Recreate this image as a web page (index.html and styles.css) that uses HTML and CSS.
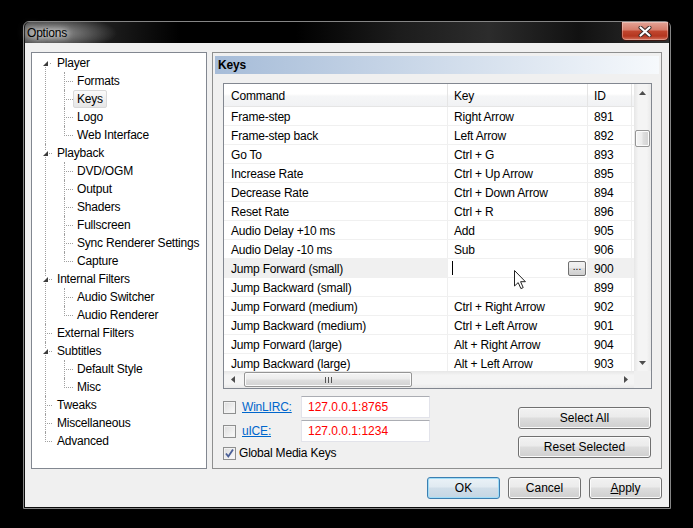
FILE: index.html
```html
<!DOCTYPE html>
<html lang="en">
<head>
  <meta charset="UTF-8" />
  <title>Options</title>
  <link rel="stylesheet" href="styles.css">
</head>
<body>
  <div class="window">
    <div class="titlebar">
      <span class="title">Options</span>
      <button class="close-btn" title="Close">
        <svg width="14" height="11" viewBox="0 0 14 11">
          <path d="M2.5 1.5 L11.5 9.5 M11.5 1.5 L2.5 9.5" stroke="#3a2a28" stroke-width="4" stroke-linecap="round"/>
          <path d="M2.5 1.5 L11.5 9.5 M11.5 1.5 L2.5 9.5" stroke="#fff" stroke-width="2.2" stroke-linecap="round"/>
        </svg>
      </button>
    </div>

    <div class="client">
      <div class="panes">
        <div class="tree">
          <ul class="root">
            <li><span class="exp"><svg width="7" height="7"><path d="M6 1 L6 6 L1 6 Z" fill="#3c3c3c"/></svg></span><span class="label">Player</span>
              <ul>
                <li><span class="label">Formats</span></li>
                <li><span class="label sel">Keys</span></li>
                <li><span class="label">Logo</span></li>
                <li><span class="label">Web Interface</span></li>
              </ul>
            </li>
            <li><span class="exp"><svg width="7" height="7"><path d="M6 1 L6 6 L1 6 Z" fill="#3c3c3c"/></svg></span><span class="label">Playback</span>
              <ul>
                <li><span class="label">DVD/OGM</span></li>
                <li><span class="label">Output</span></li>
                <li><span class="label">Shaders</span></li>
                <li><span class="label">Fullscreen</span></li>
                <li><span class="label">Sync Renderer Settings</span></li>
                <li><span class="label">Capture</span></li>
              </ul>
            </li>
            <li><span class="exp"><svg width="7" height="7"><path d="M6 1 L6 6 L1 6 Z" fill="#3c3c3c"/></svg></span><span class="label">Internal Filters</span>
              <ul>
                <li><span class="label">Audio Switcher</span></li>
                <li><span class="label">Audio Renderer</span></li>
              </ul>
            </li>
            <li><span class="label">External Filters</span></li>
            <li><span class="exp"><svg width="7" height="7"><path d="M6 1 L6 6 L1 6 Z" fill="#3c3c3c"/></svg></span><span class="label">Subtitles</span>
              <ul>
                <li><span class="label">Default Style</span></li>
                <li><span class="label">Misc</span></li>
              </ul>
            </li>
            <li><span class="label">Tweaks</span></li>
            <li><span class="label">Miscellaneous</span></li>
            <li><span class="label">Advanced</span></li>
          </ul>
        </div>

        <div class="page">
          <div class="page-title">Keys</div>

          <div class="listview">
            <div class="list-area">
              <table class="keys">
                <colgroup>
                  <col style="width:224px"><col style="width:140px"><col style="width:44px"><col style="width:62px">
                </colgroup>
                <thead>
                  <tr><th class="first">Command</th><th>Key</th><th>ID</th><th></th></tr>
                </thead>
                <tbody>
                  <tr><td class="first">Frame-step</td><td>Right Arrow</td><td>891</td><td></td></tr>
                  <tr><td class="first">Frame-step back</td><td>Left Arrow</td><td>892</td><td></td></tr>
                  <tr><td class="first">Go To</td><td>Ctrl + G</td><td>893</td><td></td></tr>
                  <tr><td class="first">Increase Rate</td><td>Ctrl + Up Arrow</td><td>895</td><td></td></tr>
                  <tr><td class="first">Decrease Rate</td><td>Ctrl + Down Arrow</td><td>894</td><td></td></tr>
                  <tr><td class="first">Reset Rate</td><td>Ctrl + R</td><td>896</td><td></td></tr>
                  <tr><td class="first">Audio Delay +10 ms</td><td>Add</td><td>905</td><td></td></tr>
                  <tr><td class="first">Audio Delay -10 ms</td><td>Sub</td><td>906</td><td></td></tr>
                  <tr class="hot">
                    <td class="first">Jump Forward (small)</td>
                    <td class="edit-cell"><div class="edit"><span class="caret"></span><span class="dots">...</span></div></td>
                    <td>900</td><td></td>
                  </tr>
                  <tr><td class="first">Jump Backward (small)</td><td></td><td>899</td><td></td></tr>
                  <tr><td class="first">Jump Forward (medium)</td><td>Ctrl + Right Arrow</td><td>902</td><td></td></tr>
                  <tr><td class="first">Jump Backward (medium)</td><td>Ctrl + Left Arrow</td><td>901</td><td></td></tr>
                  <tr><td class="first">Jump Forward (large)</td><td>Alt + Right Arrow</td><td>904</td><td></td></tr>
                  <tr><td class="first">Jump Backward (large)</td><td>Alt + Left Arrow</td><td>903</td><td></td></tr>
                </tbody>
              </table>
              <svg class="cursor" width="14" height="21" viewBox="0 0 14 21">
                <path d="M1.5 1.5 V17 L5.2 13.6 L7.9 19.6 L10.2 18.6 L7.6 12.7 H12.4 Z" fill="#fff" stroke="#222" stroke-linejoin="round"/>
              </svg>
            </div>

            <div class="vscroll">
              <div class="arrow"><svg width="7" height="4"><path d="M0 4 L3.5 0 L7 4 Z" fill="#4d4d4d"/></svg></div>
              <div class="track"><div class="vthumb"></div></div>
              <div class="arrow"><svg width="7" height="4"><path d="M0 0 L7 0 L3.5 4 Z" fill="#4d4d4d"/></svg></div>
            </div>

            <div class="hscroll">
              <div class="arrow"><svg width="4" height="7"><path d="M4 0 L4 7 L0 3.5 Z" fill="#4d4d4d"/></svg></div>
              <div class="track"><div class="hthumb"><svg width="7" height="6"><path d="M0.5 0 V6 M3.5 0 V6 M6.5 0 V6" stroke="#555"/></svg></div></div>
              <div class="arrow"><svg width="4" height="7"><path d="M0 0 L4 3.5 L0 7 Z" fill="#4d4d4d"/></svg></div>
            </div>

            <div class="corner"></div>
          </div>

          <div class="controls">
            <div class="remotes">
              <div class="ctl-row">
                <span class="check"></span>
                <a class="link" href="#">WinLIRC:</a>
                <input class="field" type="text" value="127.0.0.1:8765">
              </div>
              <div class="ctl-row">
                <span class="check"></span>
                <a class="link" href="#">uICE:</a>
                <input class="field" type="text" value="127.0.0.1:1234">
              </div>
              <div class="ctl-row global">
                <span class="check checked"><svg width="11" height="11" viewBox="0 0 11 11"><path d="M2 5.5 L4.3 8.5 L9 1.5" fill="none" stroke="#4a5f97" stroke-width="1.8"/></svg></span>
                <span class="check-text">Global Media Keys</span>
              </div>
            </div>
            <div class="list-actions">
              <button class="btn wide">Select All</button>
              <button class="btn wide">Reset Selected</button>
            </div>
          </div>
        </div>
      </div>

      <div class="dialog-buttons">
        <button class="btn default">OK</button>
        <button class="btn">Cancel</button>
        <button class="btn"><u>A</u>pply</button>
      </div>
    </div>
  </div>
</body>
</html>
```

FILE: styles.css
```css
body { margin: 0; background: #000; font: 12px "Liberation Sans", Arial, sans-serif; letter-spacing: -0.2px; color: #000; }

/* window frame */
.window { margin: 21px 0 0 23px; width: 648px; height: 488px; box-sizing: border-box; border: 1px solid #858585; border-radius: 6px 6px 0 0; padding: 0 1px 1px; background: #0c0c0c; display: flex; flex-direction: column; }
.titlebar { height: 21px; flex: none; display: flex; justify-content: space-between; align-items: flex-start; border-radius: 5px 5px 0 0;
  background: radial-gradient(ellipse 62px 17px at 30px 11px, rgba(160,160,160,.9), rgba(0,0,0,0)),
              linear-gradient(90deg, #3a3a3a 0, #1a1a1a 14%, #000 24%, #000 42%, #1c1c1c 58%, #2c2c2c 72%, #111 86%, #2e2e2e 100%); }
.title { padding: 2px 0 0 2px; line-height: 19px; text-shadow: 0 0 6px #fff, 0 0 10px rgba(255,255,255,.8); }
.close-btn { width: 48px; height: 19px; padding: 0; border: 1px solid #3b1610; border-top: none; border-radius: 0 0 5px 5px; display: flex; align-items: center; justify-content: center;
  background: linear-gradient(#e4a497 0, #d57b69 45%, #c1472f 50%, #b4361f 78%, #d5735d 100%); box-shadow: inset 0 0 0 1px rgba(255,255,255,.3); }

.client { flex: 1; background: #f0f0f0; padding: 9px 7px 0 6px; display: flex; flex-direction: column; }
.panes { height: 417px; display: flex; gap: 5px; }

/* tree */
.tree { width: 176px; flex: none; box-sizing: border-box; border: 1px solid #828790; background: #fff; padding-top: 1px; }
.tree ul { list-style: none; margin: 0; padding: 0; }
.tree li { position: relative; line-height: 18px; }
.root > li { padding-left: 21px; }
.root ul > li { padding-left: 20px; }
.label { display: inline-block; vertical-align: top; line-height: 15px; padding: 1px 3px 0; border: 1px solid transparent; border-radius: 2px; white-space: nowrap; }
.label.sel { border-color: #d9d9d9; background: linear-gradient(#fafafa, #e6e6e6); }
.tree li::before { content: ""; position: absolute; top: 0; height: 9px; border-left: 1px dotted #a0a0a0; border-bottom: 1px dotted #a0a0a0; }
.root > li::before { left: 13px; width: 6px; }
.root ul > li::before { left: 11px; width: 8px; }
.root > li:first-child::before { border-left: none; }
.tree li:not(:last-child)::after { content: ""; position: absolute; top: 9px; bottom: 0; border-left: 1px dotted #a0a0a0; }
.root > li:not(:last-child)::after { left: 13px; }
.root ul > li:not(:last-child)::after { left: 11px; }
.exp { position: absolute; left: 10px; top: 6px; width: 7px; height: 7px; background: #fff; z-index: 1; }
.exp svg { display: block; }

/* right page */
.page { flex: 1; border: 1px solid #8e8f8f; padding: 3px 2px 0; display: flex; flex-direction: column; }
.page-title { height: 18px; box-sizing: border-box; padding: 1px 0 0 3px; line-height: 17px; font-weight: bold; background: linear-gradient(90deg, #a6bcd8, #f6f9fc); }

.listview { margin: 9px 0 0 8px; width: 429px; height: 306px; box-sizing: border-box; border: 1px solid #828790; background: #fff; display: grid; grid-template-columns: 1fr 17px; grid-template-rows: 1fr 17px; }
.list-area { position: relative; overflow: hidden; }
.keys { border-collapse: separate; border-spacing: 0; table-layout: fixed; width: 470px; }
.keys th, .keys td { padding: 0 0 0 6px; text-align: left; white-space: nowrap; overflow: hidden; border-right: 1px solid #efefef; }
.keys th { font-weight: normal; padding-top: 2px; line-height: 20px; border-bottom: 1px solid #e5e5e5; border-right-color: #e5e5e5; background: linear-gradient(#fff 0, #fff 45%, #f5f6f7 55%, #f1f2f4 100%); }
.keys td { padding-top: 3px; line-height: 15px; border-bottom: 1px solid #f0f0f0; }
.keys .first { padding-left: 7px; }
.keys tr.hot td { background: #f0f0f0; }
.keys tr.hot td.edit-cell { background: #fff; padding: 0; }
.edit { height: 18px; display: flex; align-items: center; }
.caret { width: 1px; height: 14px; margin-left: 4px; background: #000; }
.dots { margin: 0 1px 0 auto; width: 18px; height: 15px; box-sizing: border-box; border: 1px solid #707070; border-radius: 2px; font-size: 10px; line-height: 10px; text-align: center; letter-spacing: 0; background: linear-gradient(#f2f2f2, #ebebeb 45%, #ddd 50%, #cfcfcf); }
.cursor { position: absolute; left: 289px; top: 185px; }

.vscroll { display: flex; flex-direction: column; background: linear-gradient(90deg, #e6e6e6, #f4f4f4 25%, #f4f4f4 75%, #e9e9e9); }
.vscroll .arrow { height: 17px; display: flex; align-items: center; justify-content: center; }
.vscroll .track { flex: 1; }
.vthumb { margin: 29px 1px 0; height: 17px; box-sizing: border-box; border: 1px solid #959595; border-radius: 2px; background: linear-gradient(90deg, #f4f4f4, #ececec 45%, #dedede 55%, #d2d2d2); box-shadow: inset 0 0 0 1px #fbfbfb; }
.hscroll { display: flex; background: linear-gradient(#e6e6e6, #f4f4f4 25%, #f4f4f4 75%, #e9e9e9); }
.hscroll .arrow { width: 17px; display: flex; align-items: center; justify-content: center; }
.hscroll .track { flex: 1; }
.hthumb { margin: 1px 0 0 3px; width: 168px; height: 15px; box-sizing: border-box; border: 1px solid #959595; border-radius: 2px; display: flex; align-items: center; justify-content: center; background: linear-gradient(#f4f4f4, #ececec 45%, #dedede 55%, #d2d2d2); box-shadow: inset 0 0 0 1px #fbfbfb; }
.corner { background: #f0f0f0; }

/* lower controls */
.controls { display: flex; margin-left: 8px; width: 428px; }
.remotes { margin-top: 7px; }
.ctl-row { display: flex; align-items: center; height: 22px; margin-bottom: 2px; }
.ctl-row.global { height: 18px; margin-top: 1px; }
.check { width: 13px; height: 13px; flex: none; box-sizing: border-box; border: 1px solid #8e8f8f; background: linear-gradient(135deg, #dcdcdc, #fbfbfb); box-shadow: inset 0 0 0 1px #f2f2f2; display: flex; align-items: center; justify-content: center; }
.link { width: 59px; margin-left: 6px; color: #0066cc; text-decoration: underline; }
.field { width: 129px; height: 22px; box-sizing: border-box; border: 1px solid #e2e3ea; border-top-color: #abadb3; padding: 0 0 0 6px; font: inherit; color: #ff0000; background: #fff; }
.check-text { margin-left: 3px; }
.list-actions { margin-left: auto; margin-top: 18px; display: flex; flex-direction: column; gap: 7px; }

.btn { width: 73px; height: 22px; box-sizing: border-box; padding: 0; border: 1px solid #707070; border-radius: 3px; font: inherit; color: #000; background: linear-gradient(#f2f2f2, #ebebeb 45%, #dddddd 50%, #cfcfcf); box-shadow: inset 0 0 0 1px #fbfbfb; }
.btn.wide { width: 133px; }
.btn.default { border-color: #3c7fb1; background: linear-gradient(#eaf2f7, #e0eaf1 45%, #d0dee9 50%, #c5d6e3); box-shadow: inset 0 0 0 1px #9fdcf7; }
.dialog-buttons { display: flex; justify-content: flex-end; gap: 8px; margin-top: 8px; }
```
